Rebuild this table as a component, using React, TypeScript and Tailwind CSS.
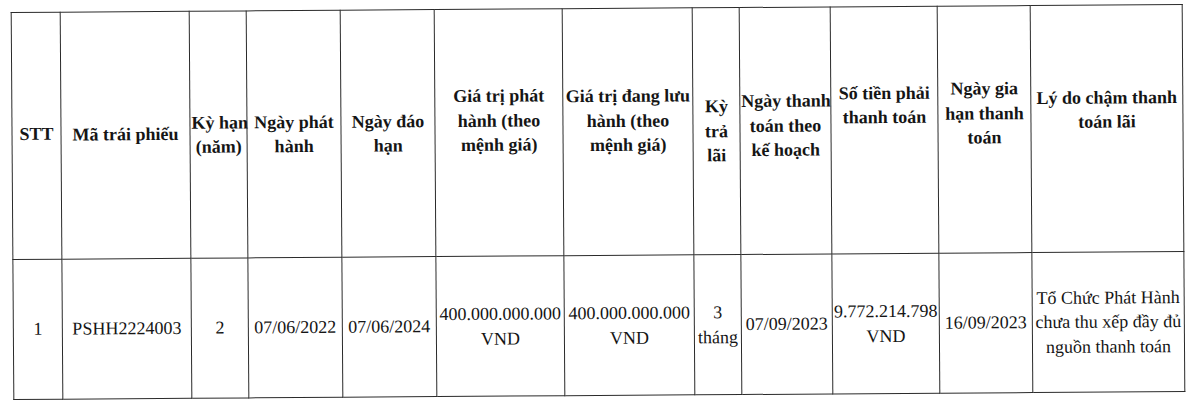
import React from "react";

// Bảng trái phiếu chậm thanh toán lãi (bản scan)
const cols = [49, 129, 57, 94, 94, 128, 130, 47, 91, 107, 93, 152];

const th =
  "border border-[#2b2b2b] px-[1px] align-middle text-center font-bold whitespace-nowrap";
const td =
  "border border-[#2b2b2b] px-[1px] align-middle text-center whitespace-nowrap";

export default function App() {
  return (
    <div
      className="h-[402px] w-[1200px] overflow-hidden bg-white pl-[12px] pt-[8px] text-[18px] leading-[24.5px] text-[#151515]"
      style={{ fontFamily: '"Liberation Serif", "Times New Roman", serif' }}
    >
      <table className="w-[1171px] table-fixed border-collapse -rotate-[0.39deg]">
        <colgroup>
          {cols.map((w, i) => (
            <col key={i} style={{ width: w }} />
          ))}
        </colgroup>
        <tbody>
          <tr className="h-[247px]">
            <td className={`${th} pb-[4px]`}>STT</td>
            <td className={`${th} pb-[2px]`}>Mã trái phiếu</td>
            <td className={th}>
              Kỳ hạn
              <br />
              (năm)
            </td>
            <td className={th}>
              Ngày phát
              <br />
              hành
            </td>
            <td className={th}>
              Ngày đáo
              <br />
              hạn
            </td>
            <td className={`${th} pb-[24px]`}>
              Giá trị phát
              <br />
              hành (theo
              <br />
              mệnh giá)
            </td>
            <td className={`${th} pb-[22px]`}>
              Giá trị đang lưu
              <br />
              hành (theo
              <br />
              mệnh giá)
            </td>
            <td className={th}>
              Kỳ
              <br />
              trả
              <br />
              lãi
            </td>
            <td className={`${th} pb-[10px]`}>
              Ngày thanh
              <br />
              toán theo
              <br />
              kế hoạch
            </td>
            <td className={`${th} pb-[50px]`}>
              Số tiền phải
              <br />
              thanh toán
            </td>
            <td className={`${th} pb-[32px]`}>
              Ngày gia
              <br />
              hạn thanh
              <br />
              toán
            </td>
            <td className={`${th} pb-[38px]`}>
              Lý do chậm thanh
              <br />
              toán lãi
            </td>
          </tr>
          <tr className="h-[140px]">
            <td className={td}>1</td>
            <td className={td}>PSHH2224003</td>
            <td className={td}>2</td>
            <td className={td}>07/06/2022</td>
            <td className={td}>07/06/2024</td>
            <td className={td}>
              400.000.000.000
              <br />
              VND
            </td>
            <td className={td}>
              400.000.000.000
              <br />
              VND
            </td>
            <td className={td}>
              3
              <br />
              tháng
            </td>
            <td className={td}>07/09/2023</td>
            <td className={td}>
              9.772.214.798
              <br />
              VND
            </td>
            <td className={td}>16/09/2023</td>
            <td className={td}>
              Tổ Chức Phát Hành
              <br />
              chưa thu xếp đầy đủ
              <br />
              nguồn thanh toán
            </td>
          </tr>
        </tbody>
      </table>
    </div>
  );
}
